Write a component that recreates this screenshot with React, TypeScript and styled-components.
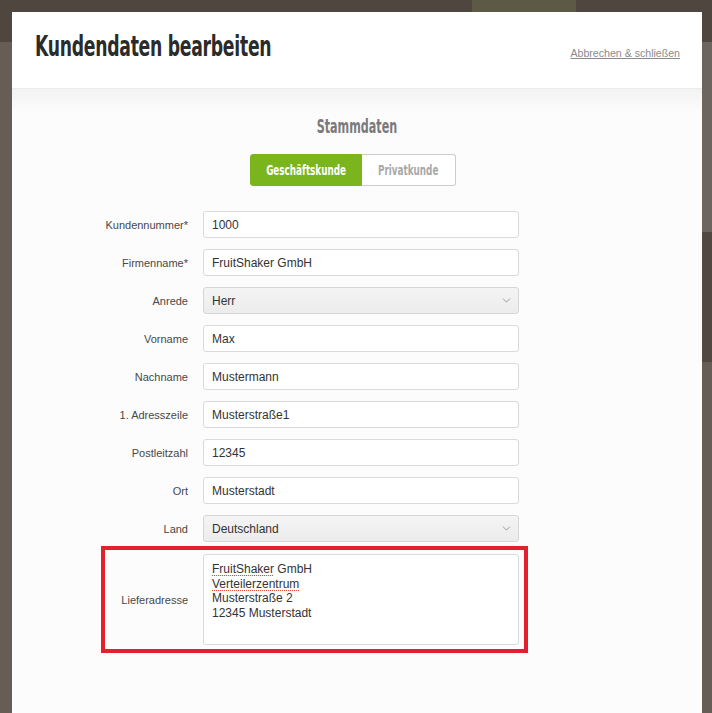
import styled, { createGlobalStyle } from "styled-components";
import { ChevronDown } from "lucide-react";

const condensed = `"DejaVu Sans", "Liberation Sans", sans-serif`;

const GlobalStyle = createGlobalStyle`
  html, body {
    margin: 0;
    padding: 0;
  }
  body {
    font-family: "Liberation Sans", Arial, sans-serif;
    background: #655d56;
    overflow: hidden;
  }
`;

const navItems = [
  { label: "Dashboard", active: false },
  { label: "Kunden", active: true },
  { label: "Belege", active: false },
];

const fields = [
  { label: "Kundennummer*", value: "1000" },
  { label: "Firmenname*", value: "FruitShaker GmbH" },
  { label: "Anrede", value: "Herr", select: true },
  { label: "Vorname", value: "Max" },
  { label: "Nachname", value: "Mustermann" },
  { label: "1. Adresszeile", value: "Musterstraße1" },
  { label: "Postleitzahl", value: "12345" },
  { label: "Ort", value: "Musterstadt" },
  { label: "Land", value: "Deutschland", select: true },
];

export default function App() {
  return (
    <Page>
      <GlobalStyle />
      <Backdrop>
        <NavBar>
          {navItems.map((item) => (
            <NavItem key={item.label} $active={item.active}>
              <NavDot />
              {item.label}
            </NavItem>
          ))}
        </NavBar>
        <Main>
          <Aside>
            <AsideCard $tone="light" $height={190} />
            <AsideCard $tone="dark" $height={130} />
          </Aside>
        </Main>
      </Backdrop>

      <Modal>
        <Header>
          <Title>
            <Narrow $origin="left" $scale={0.66}>
              Kundendaten bearbeiten
            </Narrow>
          </Title>
          <CloseLink href="#">Abbrechen &amp; schließen</CloseLink>
        </Header>
        <Body>
          <SectionTitle>
            <Narrow $origin="center" $scale={0.62}>
              Stammdaten
            </Narrow>
          </SectionTitle>
          <Toggle>
            <ToggleButton $active $width={112}>
              <Narrow $origin="center" $scale={0.7}>
                Geschäftskunde
              </Narrow>
            </ToggleButton>
            <ToggleButton $width={94}>
              <Narrow $origin="center" $scale={0.7}>
                Privatkunde
              </Narrow>
            </ToggleButton>
          </Toggle>
          <Form>
            {fields.map((field) => (
              <Row key={field.label}>
                <Label>{field.label}</Label>
                {field.select ? (
                  <SelectWrap>
                    <Select defaultValue={field.value}>
                      <option>{field.value}</option>
                    </Select>
                    <Chevron size={13} strokeWidth={1.6} />
                  </SelectWrap>
                ) : (
                  <Input defaultValue={field.value} />
                )}
              </Row>
            ))}
            <HighlightRow>
              <Label>Lieferadresse</Label>
              <TextArea>
                <Misspelled>FruitShaker</Misspelled> GmbH{"\n"}
                <Misspelled>Verteilerzentrum</Misspelled>
                {"\n"}Musterstraße 2{"\n"}12345 Musterstadt
              </TextArea>
            </HighlightRow>
          </Form>
        </Body>
      </Modal>
    </Page>
  );
}

const Page = styled.div`
  position: relative;
  width: 100vw;
  height: 100vh;
  overflow: hidden;
`;

const Backdrop = styled.div`
  display: flex;
  flex-direction: column;
  height: 100%;
`;

const NavBar = styled.div`
  display: flex;
  height: 42px;
  padding-left: 354px;
  background: #4e463f;
`;

const NavItem = styled.div<{ $active?: boolean }>`
  display: flex;
  align-items: center;
  gap: 8px;
  width: 104px;
  padding: 0 0 0 18px;
  margin-right: 14px;
  box-sizing: border-box;
  background: ${(p) => (p.$active ? "#5c5a44" : "transparent")};
  color: #857d76;
  font-size: 15px;
  white-space: nowrap;
`;

const NavDot = styled.span`
  width: 11px;
  height: 11px;
  border-radius: 50%;
  background: #7a726b;
`;

const Main = styled.div`
  flex: 1;
  display: flex;
  justify-content: flex-end;
`;

const Aside = styled.div`
  display: flex;
  flex-direction: column;
  width: 200px;
`;

const AsideCard = styled.div<{ $tone: "light" | "dark"; $height: number }>`
  height: ${(p) => p.$height}px;
  background: ${(p) => (p.$tone === "light" ? "#6c645e" : "#514842")};
`;

const Modal = styled.div`
  position: absolute;
  top: 12px;
  left: 12px;
  bottom: 0;
  width: 690px;
  display: flex;
  flex-direction: column;
  background: #fcfcfc;
`;

const Header = styled.div`
  display: flex;
  justify-content: space-between;
  align-items: flex-start;
  height: 77px;
  box-sizing: border-box;
  padding: 20px 22px 0 23px;
  background: #ffffff;
  border-bottom: 1px solid #ececec;
`;

const Narrow = styled.span<{ $origin: "left" | "center"; $scale: number }>`
  display: inline-block;
  transform: scaleX(${(p) => p.$scale});
  transform-origin: ${(p) => p.$origin} center;
  white-space: nowrap;
`;

const Title = styled.h1`
  margin: 0;
  font-family: ${condensed};
  font-stretch: condensed;
  font-size: 29px;
  line-height: 29px;
  font-weight: 700;
  color: #2b2b2b;
  letter-spacing: -0.4px;
`;

const CloseLink = styled.a`
  margin-top: 15px;
  font-size: 10.6px;
  color: #8a8a8a;
  text-decoration: underline;
`;

const Body = styled.div`
  flex: 1;
  display: flex;
  flex-direction: column;
  align-items: flex-start;
  padding-top: 27px;
  background: linear-gradient(#f3f3f3 0px, #fcfcfc 24px, #fcfcfc 100%);
`;

const SectionTitle = styled.h2`
  align-self: center;
  margin: 0;
  font-family: ${condensed};
  font-stretch: condensed;
  font-size: 20px;
  line-height: 20px;
  font-weight: 700;
  color: #7a7a7a;
`;

const Toggle = styled.div`
  align-self: center;
  display: flex;
  margin: 18px 8px 0 0;
`;

const ToggleButton = styled.button<{ $active?: boolean; $width: number }>`
  display: flex;
  align-items: center;
  justify-content: center;
  width: ${(p) => p.$width}px;
  height: 32px;
  padding: 0;
  font-family: ${condensed};
  font-stretch: condensed;
  font-size: 14px;
  font-weight: 700;
  cursor: pointer;
  border: 1px solid ${(p) => (p.$active ? "#7ab51d" : "#cccccc")};
  border-left-width: ${(p) => (p.$active ? "1px" : "0")};
  border-radius: ${(p) => (p.$active ? "3px 0 0 3px" : "0 3px 3px 0")};
  background: ${(p) => (p.$active ? "#7ab51d" : "#ffffff")};
  color: ${(p) => (p.$active ? "#ffffff" : "#a8a8a8")};
  overflow: hidden;
`;

const Form = styled.div`
  display: flex;
  flex-direction: column;
  gap: 11px;
  width: 417px;
  margin: 25px 0 0 90px;
`;

const Row = styled.div`
  display: grid;
  grid-template-columns: 1fr 316px;
  column-gap: 15px;
  align-items: center;
`;

const HighlightRow = styled(Row)`
  margin: -7px -9px 0 -1px;
  padding: 4px 5px 4px 0;
  border: 4px solid #e3202b;
`;

const Label = styled.label`
  font-size: 11px;
  color: #484848;
  text-align: right;
`;

const Input = styled.input`
  height: 27px;
  box-sizing: border-box;
  padding: 0 8px;
  border: 1px solid #dadada;
  border-radius: 3px;
  background: #ffffff;
  font-family: "Liberation Sans", Arial, sans-serif;
  font-size: 12px;
  color: #333333;
  outline: none;
`;

const SelectWrap = styled.div`
  position: relative;
  display: flex;
`;

const Select = styled.select`
  flex: 1;
  height: 27px;
  box-sizing: border-box;
  padding: 0 8px;
  border: 1px solid #d6d6d6;
  border-radius: 3px;
  background: linear-gradient(#f4f4f4, #ececec);
  appearance: none;
  font-family: "Liberation Sans", Arial, sans-serif;
  font-size: 12px;
  color: #333333;
  outline: none;
`;

const Chevron = styled(ChevronDown)`
  position: absolute;
  right: 6px;
  top: 7px;
  color: #8e8e8e;
  pointer-events: none;
`;

const TextArea = styled.div`
  height: 91px;
  box-sizing: border-box;
  padding: 7px 8px;
  border: 1px solid #dadada;
  border-radius: 3px;
  background: #ffffff;
  font-size: 12px;
  line-height: 14.5px;
  color: #333333;
  white-space: pre-line;
`;

const Misspelled = styled.span`
  text-decoration: underline dotted #e0504a;
  text-decoration-thickness: 1px;
  text-underline-offset: 2px;
`;
